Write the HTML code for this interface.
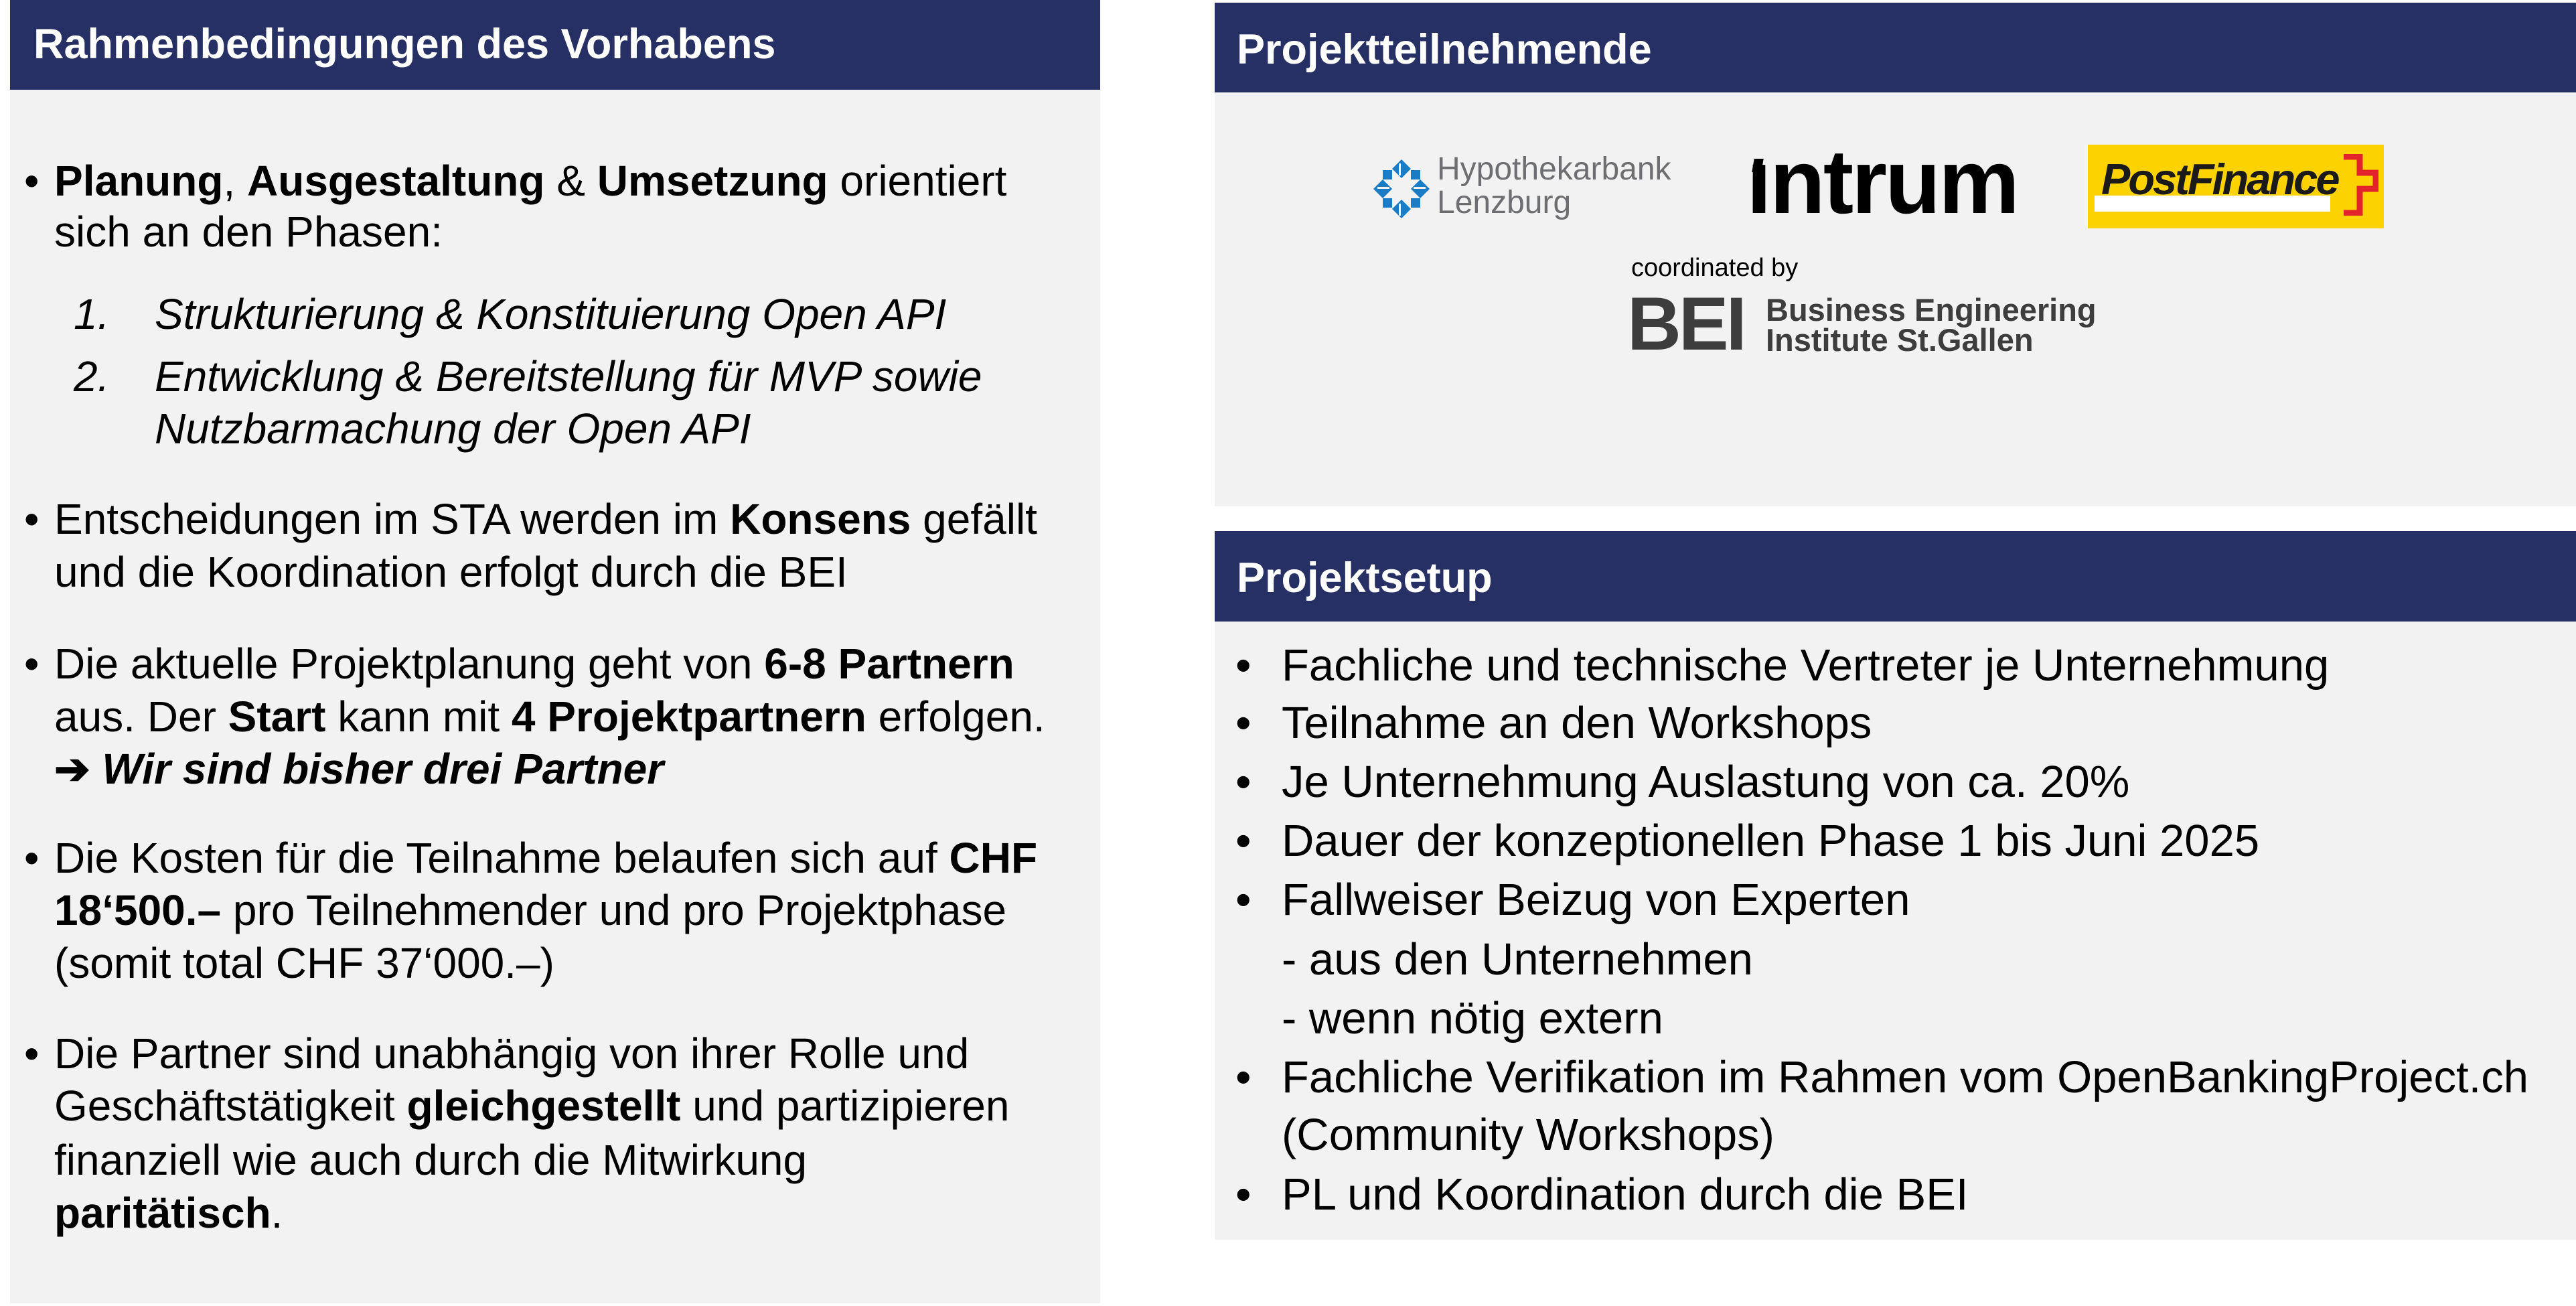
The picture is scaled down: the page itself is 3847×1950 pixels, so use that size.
<!DOCTYPE html>
<html><head><meta charset="utf-8"><style>
*{margin:0;padding:0;box-sizing:border-box}
body{width:3847px;height:1950px;background:#fff;position:relative;overflow:hidden;font-family:"Liberation Sans",sans-serif;color:#000}
.a{position:absolute}
.hd{position:absolute;background:#263064;color:#fff;font-weight:bold;font-size:63px}
.g{position:absolute;background:#f2f2f2}
.L{position:absolute;white-space:nowrap;font-size:64px;line-height:78px;height:78px}
.R{position:absolute;white-space:nowrap;font-size:67px;line-height:88px;height:88px}
i{font-style:italic}
</style></head><body>
<!-- left -->
<div class="hd" style="left:15px;top:0;width:1628px;height:134px"><div class="a" style="left:35px;top:30px">Rahmenbedingungen des Vorhabens</div></div>
<div class="g" style="left:15px;top:134px;width:1628px;height:1812px"></div>

<div class="L" style="left:36px;top:231px">•</div>
<div class="L" style="left:81px;top:231px"><b>Planung</b>, <b>Ausgestaltung</b> &amp; <b>Umsetzung</b> orientiert</div>
<div class="L" style="left:81px;top:307px">sich an den Phasen:</div>
<div class="L" style="left:110px;top:430px"><i>1.</i></div>
<div class="L" style="left:231px;top:430px"><i>Strukturierung &amp; Konstituierung Open API</i></div>
<div class="L" style="left:110px;top:523px"><i>2.</i></div>
<div class="L" style="left:231px;top:523px"><i>Entwicklung &amp; Bereitstellung für MVP sowie</i></div>
<div class="L" style="left:231px;top:601px"><i>Nutzbarmachung der Open API</i></div>

<div class="L" style="left:36px;top:736px">•</div>
<div class="L" style="left:81px;top:736px">Entscheidungen im STA werden im <b>Konsens</b> gefällt</div>
<div class="L" style="left:81px;top:815px">und die Koordination erfolgt durch die BEI</div>

<div class="L" style="left:36px;top:952px">•</div>
<div class="L" style="left:81px;top:952px">Die aktuelle Projektplanung geht von <b>6-8 Partnern</b></div>
<div class="L" style="left:81px;top:1031px">aus. Der <b>Start</b> kann mit <b>4 Projektpartnern</b> erfolgen.</div>
<div class="L" style="left:81px;top:1109px"><b>➔ <i>Wir sind bisher drei Partner</i></b></div>

<div class="L" style="left:36px;top:1242px">•</div>
<div class="L" style="left:81px;top:1242px">Die Kosten für die Teilnahme belaufen sich auf <b>CHF</b></div>
<div class="L" style="left:81px;top:1320px"><b>18‘500.–</b> pro Teilnehmender und pro Projektphase</div>
<div class="L" style="left:81px;top:1399px">(somit total CHF 37‘000.–)</div>

<div class="L" style="left:36px;top:1534px">•</div>
<div class="L" style="left:81px;top:1534px">Die Partner sind unabhängig von ihrer Rolle und</div>
<div class="L" style="left:81px;top:1612px">Geschäftstätigkeit <b>gleichgestellt</b> und partizipieren</div>
<div class="L" style="left:81px;top:1693px">finanziell wie auch durch die Mitwirkung</div>
<div class="L" style="left:81px;top:1772px"><b>paritätisch</b>.</div>

<!-- right top -->
<div class="hd" style="left:1814px;top:4px;width:2033px;height:134px"><div class="a" style="left:33px;top:34px">Projektteilnehmende</div></div>
<div class="g" style="left:1814px;top:138px;width:2033px;height:618px"></div>

<svg class="a" style="left:2051px;top:238px" width="84" height="88" viewBox="0 0 84 88">
<g fill="#1a7cc4">
<polygon points="42,0 56,14 42,28 28,14"/>
<polygon points="42,60 56,74 42,88 28,74"/>
<polygon points="0,44 14,30 28,44 14,58"/>
<polygon points="56,44 70,30 84,44 70,58"/>
<polygon points="14,16 28,16 28,30 14,30"/>
<polygon points="56,16 70,16 70,30 56,30"/>
<polygon points="14,58 28,58 28,72 14,72"/>
<polygon points="56,58 70,58 70,72 56,72"/>
</g>
<g fill="#f2f2f2"><rect x="38" y="6" width="3" height="18"/><rect x="38" y="66" width="3" height="18"/><rect x="6" y="41" width="18" height="3"/><rect x="60" y="41" width="18" height="3"/></g>
</svg>
<div class="a" style="left:2146px;top:228px;font-size:48px;line-height:50px;color:#6d6e71;white-space:nowrap">Hypothekarbank<br>Lenzburg</div>

<div class="a" style="left:2608px;top:196px;font-size:136px;font-weight:bold;letter-spacing:-3px;line-height:150px;white-space:nowrap">ıntrum</div>
<div class="a" style="left:2618px;top:237px;width:14px;height:20px;background:#000;transform:skewX(-10deg)"></div>

<div class="a" style="left:3118px;top:216px;width:442px;height:125px;background:#fcd200"></div>
<div class="a" style="left:3128px;top:292px;width:352px;height:24px;background:#fff"></div>
<div class="a" style="left:3138px;top:228px;font-size:65px;font-weight:bold;font-style:italic;letter-spacing:-3px;line-height:80px;color:#1a1a1a;white-space:nowrap">PostFinance</div>
<svg class="a" style="left:3488px;top:230px" width="64" height="92" viewBox="0 0 64 92"><path d="M12 4H36V28H60V52H36V88H12" fill="none" stroke="#e3232b" stroke-width="9"/></svg>

<div class="a" style="left:2436px;top:378px;font-size:38px;line-height:44px;white-space:nowrap">coordinated by</div>
<div class="a" style="left:2430px;top:428px;font-size:112px;font-weight:bold;line-height:112px;color:#3d3d3d;letter-spacing:-4px;white-space:nowrap">BEI</div>
<div class="a" style="left:2637px;top:440px;font-size:47px;font-weight:bold;line-height:45px;color:#3d3d3d;white-space:nowrap">Business Engineering<br>Institute St.Gallen</div>

<!-- right bottom -->
<div class="hd" style="left:1814px;top:793px;width:2033px;height:135px"><div class="a" style="left:33px;top:34px">Projektsetup</div></div>
<div class="g" style="left:1814px;top:928px;width:2033px;height:923px"></div>

<div class="R" style="left:1845px;top:950px">•</div><div class="R" style="left:1914px;top:950px">Fachliche und technische Vertreter je Unternehmung</div>
<div class="R" style="left:1845px;top:1036px">•</div><div class="R" style="left:1914px;top:1036px">Teilnahme an den Workshops</div>
<div class="R" style="left:1845px;top:1124px">•</div><div class="R" style="left:1914px;top:1124px">Je Unternehmung Auslastung von ca. 20%</div>
<div class="R" style="left:1845px;top:1212px">•</div><div class="R" style="left:1914px;top:1212px">Dauer der konzeptionellen Phase 1 bis Juni 2025</div>
<div class="R" style="left:1845px;top:1300px">•</div><div class="R" style="left:1914px;top:1300px">Fallweiser Beizug von Experten</div>
<div class="R" style="left:1914px;top:1389px">- aus den Unternehmen</div>
<div class="R" style="left:1914px;top:1477px">- wenn nötig extern</div>
<div class="R" style="left:1845px;top:1565px">•</div><div class="R" style="left:1914px;top:1565px">Fachliche Verifikation im Rahmen vom OpenBankingProject.ch</div>
<div class="R" style="left:1914px;top:1651px">(Community Workshops)</div>
<div class="R" style="left:1845px;top:1740px">•</div><div class="R" style="left:1914px;top:1740px">PL und Koordination durch die BEI</div>
</body></html>
